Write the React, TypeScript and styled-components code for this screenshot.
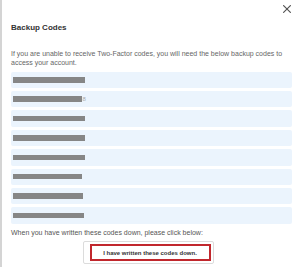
import React from "react";
import styled, { createGlobalStyle } from "styled-components";

const GlobalStyle = createGlobalStyle`
  html, body {
    margin: 0;
    padding: 0;
    background: #ffffff;
  }
  body {
    font-family: "Liberation Sans", Arial, sans-serif;
  }
`;

const BackupCodes = () => {
  // masked codes, only the bar width differs from row to row
  const codes = [
    { width: 72, tail: "" },
    { width: 69, tail: "8" },
    { width: 72, tail: "" },
    { width: 72, tail: "" },
    { width: 72, tail: "" },
    { width: 69, tail: "" },
    { width: 70, tail: "" },
    { width: 71, tail: "" },
  ];

  return (
    <>
      <GlobalStyle />
      <Modal>
        <Header>
          <CloseButton aria-label="Close">
            <svg width="8" height="8" viewBox="0 0 8 8">
              <path
                d="M0.6 0.6 L7.4 7.4 M7.4 0.6 L0.6 7.4"
                stroke="#555"
                strokeWidth="1.2"
                strokeLinecap="round"
              />
            </svg>
          </CloseButton>
        </Header>

        <Title>Backup Codes</Title>

        <Description>
          If you are unable to receive Two-Factor codes, you will need the below
          backup codes to access your account.
        </Description>

        <CodeList>
          {codes.map((item, i) => (
            <CodeRow key={i}>
              <CodeMask $width={item.width} />
              {item.tail && <CodeTail>{item.tail}</CodeTail>}
            </CodeRow>
          ))}
        </CodeList>

        <Note>When you have written these codes down, please click below:</Note>

        <Footer>
          <ConfirmButton>
            <ConfirmLabel>I have written these codes down.</ConfirmLabel>
          </ConfirmButton>
        </Footer>
      </Modal>
    </>
  );
};

export default BackupCodes;

const Modal = styled.div`
  width: 300px;
  height: 267px;
  box-sizing: border-box;
  border-left: 2px solid #d4d4d4;
  padding: 0 8px 0 9px;
  background: #fff;
  overflow: hidden;
  display: flex;
  flex-direction: column;
`;

const Header = styled.div`
  display: flex;
  justify-content: flex-end;
  padding-top: 5px;
  padding-right: 1px;
`;

const CloseButton = styled.button`
  width: 8px;
  height: 8px;
  padding: 0;
  border: none;
  background: none;
  display: flex;
  cursor: pointer;
`;

const Title = styled.h2`
  margin: 10px 0 0;
  font-size: 8px;
  line-height: 10px;
  font-weight: 700;
  color: #333;
`;

const Description = styled.p`
  margin: 16px 0 0;
  font-size: 7px;
  line-height: 9.3px;
  color: #666;
`;

const CodeList = styled.div`
  margin-top: 4px;
  display: flex;
  flex-direction: column;
  gap: 3px;
`;

const CodeRow = styled.div`
  height: 16.4px;
  background: #ebf4fd;
  border-radius: 2px;
  padding-left: 2px;
  display: flex;
  align-items: center;
`;

const CodeMask = styled.div<{ $width: number }>`
  width: ${(p) => p.$width}px;
  height: 5.5px;
  background: #868686;
`;

const CodeTail = styled.span`
  font-size: 6px;
  color: #aaa;
  margin-left: 0.5px;
`;

const Note = styled.p`
  margin: 4.5px 0 0;
  font-size: 7px;
  line-height: 9.3px;
  color: #555;
`;

const Footer = styled.div`
  margin-top: 3.5px;
  padding-right: 7px;
  display: flex;
  justify-content: center;
`;

const ConfirmButton = styled.button`
  width: 131px;
  height: 23px;
  box-sizing: border-box;
  padding: 0 2px 0 0;
  border: 1px solid #dcdcdc;
  border-radius: 2px;
  background: #fff;
  display: flex;
  align-items: center;
  justify-content: flex-end;
`;

const ConfirmLabel = styled.span`
  width: 121px;
  height: 17px;
  box-sizing: border-box;
  border: 2px solid #c1272d;
  display: flex;
  align-items: center;
  justify-content: center;
  font-family: "Liberation Sans", Arial, sans-serif;
  font-size: 6px;
  font-weight: 700;
  color: #333;
`;
